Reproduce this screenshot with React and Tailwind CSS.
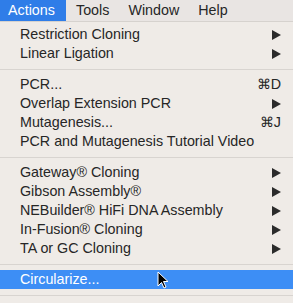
import React from "react";

const font = { fontFamily: '"Helvetica Neue", "Liberation Sans", Arial, sans-serif' };

const Arrow = () => (
  <svg width="9" height="10" viewBox="0 0 9 10" className="fill-[#2b2b2b]">
    <path d="M0 0 L9 5 L0 10 Z" />
  </svg>
);

const Item = ({ label, right, active }) => (
  <div
    className={`flex h-[19px] items-center justify-between pl-[20px] pr-[12px] ${
      active ? "bg-[#3d8ef5] text-white" : "text-[#262626]"
    }`}
  >
    <span>{label}</span>
    {right === "arrow" ? <Arrow /> : right ? <span className="pr-[-1px]">{right}</span> : null}
  </div>
);

const Sep = () => (
  <div className="flex h-[12px] items-center">
    <div className="h-px w-full bg-[#d8d4d0]" />
  </div>
);

export default function App() {
  return (
    <div className="h-[303px] w-[293px] overflow-hidden bg-[#efebe7] text-[14.3px]" style={font}>
      {/* Menu bar */}
      <div className="flex h-[22px] items-center border-b border-[#d6d2ce] bg-[#e9e5e3] text-[#262626]">
        <div className="flex h-full w-[66px] items-center bg-[#2f7de8] pl-[8px] text-white">Actions</div>
        <div className="pl-[10px]">Tools</div>
        <div className="pl-[19px]">Window</div>
        <div className="pl-[19px]">Help</div>
      </div>

      {/* Dropdown */}
      <div className="pt-[3px]">
        <Item label="Restriction Cloning" right="arrow" />
        <Item label="Linear Ligation" right="arrow" />
        <Sep />
        <Item label="PCR..." right="⌘D" />
        <Item label="Overlap Extension PCR" right="arrow" />
        <Item label="Mutagenesis..." right="⌘J" />
        <Item label="PCR and Mutagenesis Tutorial Video" />
        <Sep />
        <Item label="Gateway® Cloning" right="arrow" />
        <Item label="Gibson Assembly®" right="arrow" />
        <Item label="NEBuilder® HiFi DNA Assembly" right="arrow" />
        <Item label="In-Fusion® Cloning" right="arrow" />
        <Item label="TA or GC Cloning" right="arrow" />
        <Sep />
        <div className="relative">
          <Item label="Circularize..." active />
          <svg
            className="absolute left-[157px] top-[1px]"
            width="12"
            height="19"
            viewBox="0 0 12 19"
          >
            <path d="M1 1 L1 15 L4.5 11.5 L7 17 L9 16 L6.5 10.5 L11 10.5 Z" fill="#000" stroke="#fff" strokeWidth="1" />
          </svg>
        </div>
        <Sep />
      </div>
    </div>
  );
}
